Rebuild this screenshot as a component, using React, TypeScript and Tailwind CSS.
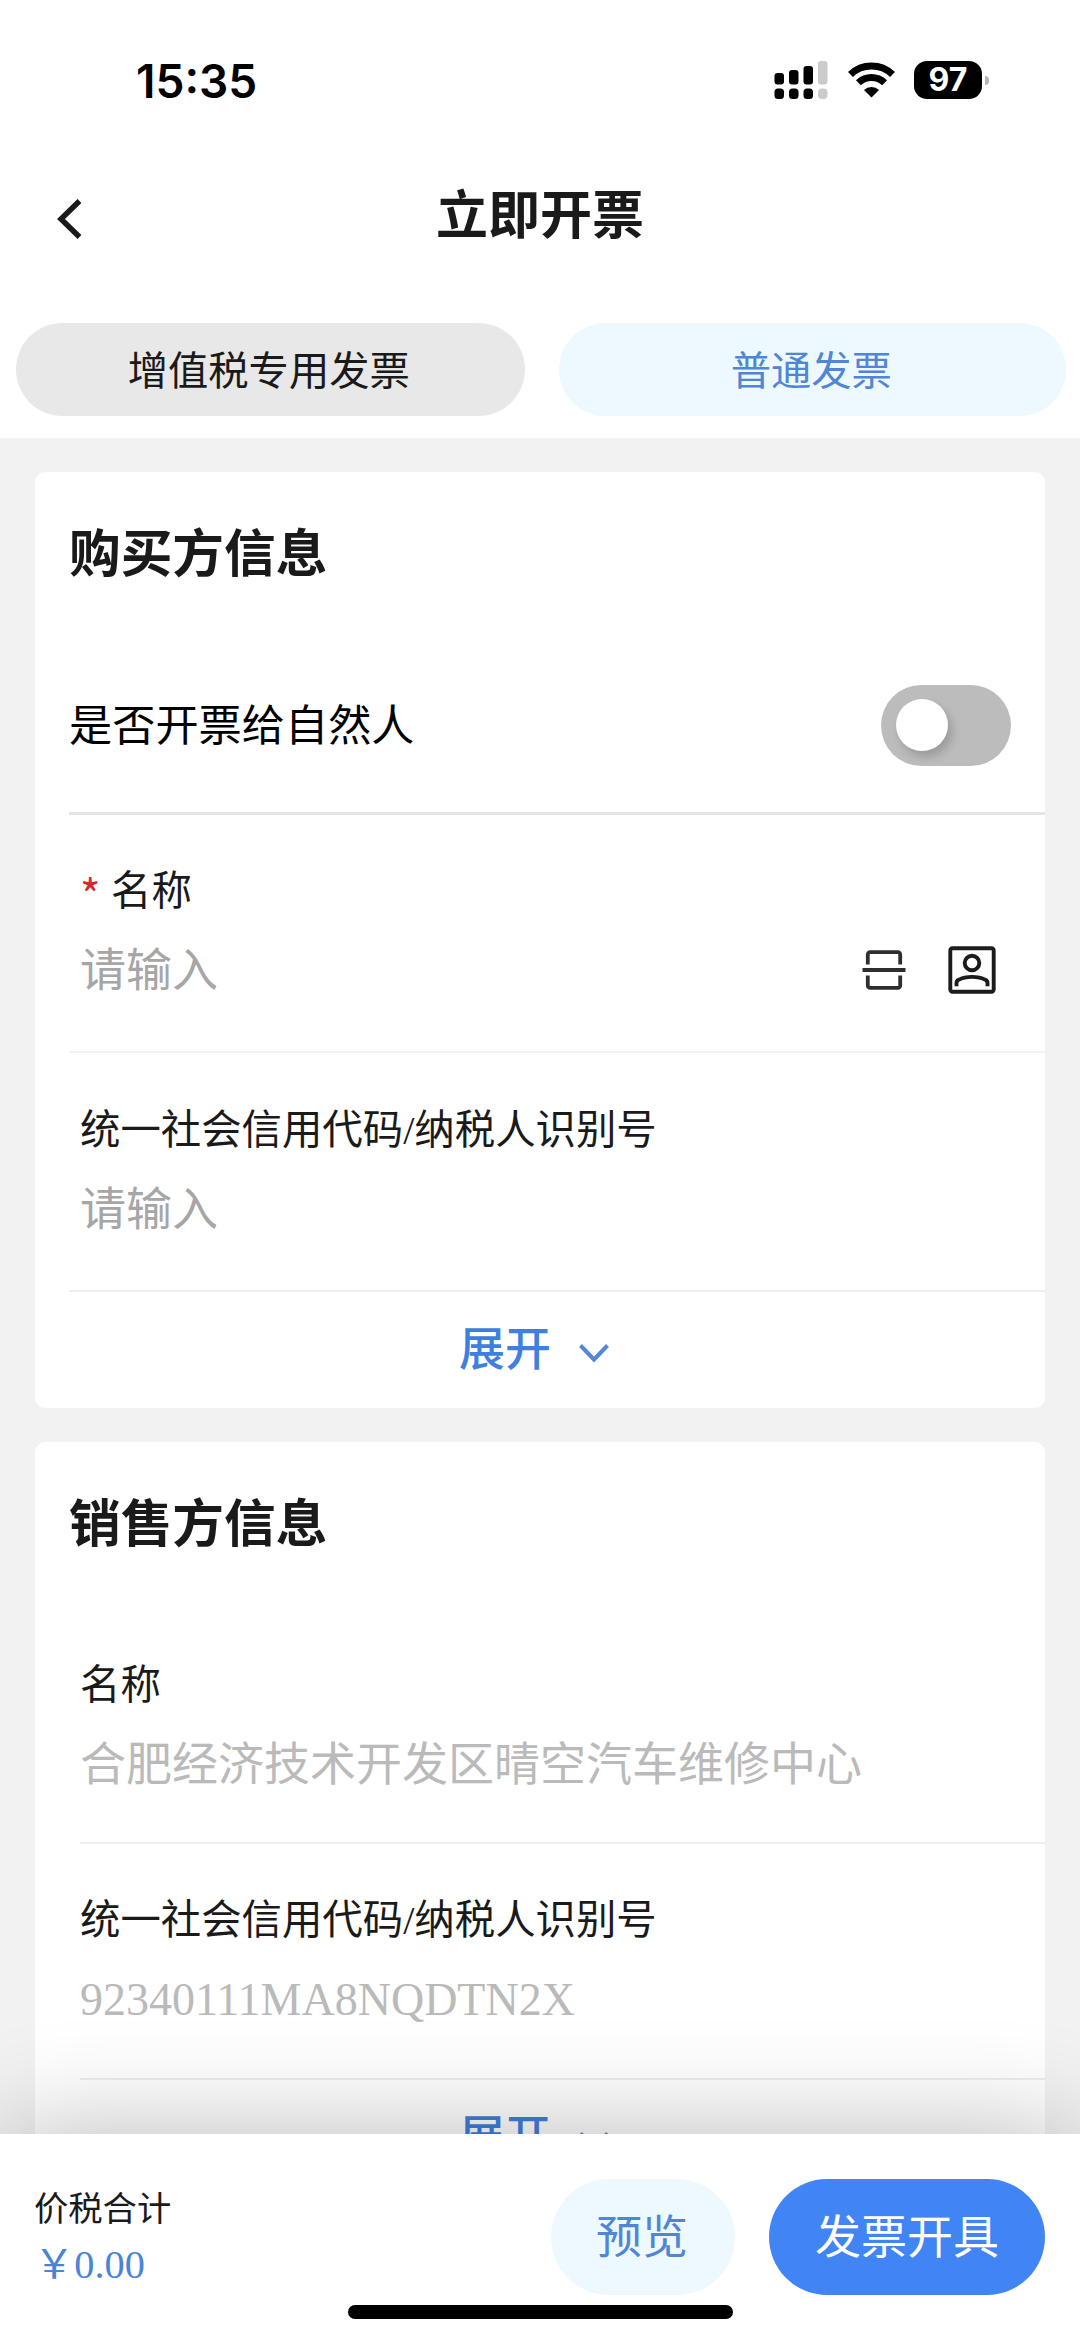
import type { ReactNode } from "react";

const StatusBar = () => {
  return (
    <div className="flex h-[160px] items-center justify-between pr-[91px] pl-[136px] font-['Inter',sans-serif]">
      <span className="pt-[1px] text-[46px] leading-[50px] font-semibold text-black">
        15:35
      </span>
      <div className="flex items-center">
        <svg className="h-[38px] w-[55px]" viewBox="0 0 55 38" fill="#000">
          <rect x="0.5" y="12" width="9.5" height="11.5" rx="3" />
          <rect x="15" y="9" width="9.5" height="14.5" rx="3" />
          <rect x="29.5" y="5" width="9.5" height="18.5" rx="3" />
          <rect x="44" y="0" width="9.5" height="23.5" rx="3" fill="#cbcbcb" />
          <rect x="0.5" y="27.5" width="9.5" height="10.5" rx="3.5" />
          <rect x="15" y="27.5" width="9.5" height="10.5" rx="3.5" />
          <rect x="29.5" y="27.5" width="9.5" height="10.5" rx="3.5" />
          <rect x="44" y="27.5" width="9.5" height="10.5" rx="4" fill="#cbcbcb" />
        </svg>
        <svg className="ml-[19px] h-[36px] w-[47px]" viewBox="0 0 47 36">
          <g fill="none" stroke="#000" strokeWidth="7">
            <path d="M2.5 12.5a30.5 30.5 0 0 1 42 0" />
            <path d="M10.4 20.8a18.8 18.8 0 0 1 26.2 0" />
          </g>
          <path d="M23.5 35.5l-7.5-7.5a10.8 10.8 0 0 1 15 0z" fill="#000" />
        </svg>
        <div className="ml-[19px] flex h-[38px] w-[68px] items-center justify-center rounded-[13px] bg-black text-[32px] leading-[38px] font-bold text-white">
          97
        </div>
        <div className="ml-[3px] h-[9px] w-[4px] rounded-r-full bg-[#b5b5b5]" />
      </div>
    </div>
  );
};

const NavBar = () => {
  return (
    <div className="grid h-[118px] grid-cols-3 items-center pl-[56px]">
      <svg
        className="h-[40px] w-[28px]"
        viewBox="0 0 28 40"
        fill="none"
        stroke="#1a1a1a"
        strokeWidth="5.5"
      >
        <path d="M23.5 2L5 20l18.5 18" />
      </svg>
      <h1 className="-ml-[56px] pb-[4px] text-center text-[52px] leading-[60px] font-bold whitespace-nowrap text-[#1a1a1a]">
        立即开票
      </h1>
    </div>
  );
};

const ChevronDown = () => (
  <svg
    className="h-[22px] w-[32px]"
    viewBox="0 0 32 22"
    fill="none"
    stroke="#5488d6"
    strokeWidth="4"
  >
    <path d="M2.5 3.5L16 17.5l13.5-14" />
  </svg>
);

const ScanIcon = () => (
  <svg
    className="h-[40px] w-[44px]"
    viewBox="0 0 44 40"
    fill="none"
    stroke="#2e2e2e"
    strokeWidth="3.8"
  >
    <path d="M5.8 14.5V4.6a2.4 2.4 0 0 1 2.4-2.4h27.6a2.4 2.4 0 0 1 2.4 2.4v9.9" />
    <path d="M0.5 20h43" />
    <path d="M5.8 25.5v9.9a2.4 2.4 0 0 0 2.4 2.4h27.6a2.4 2.4 0 0 0 2.4-2.4v-9.9" />
  </svg>
);

const ContactIcon = () => (
  <svg
    className="h-[48px] w-[48px]"
    viewBox="0 0 48 48"
    fill="none"
    stroke="#1c1c1c"
    strokeWidth="3.9"
  >
    <rect x="2.3" y="2.3" width="43.4" height="43.4" rx="2.2" />
    <circle cx="24" cy="17" r="7.3" />
    <path d="M8.5 40.3v-3.1c0-1.6.6-2.7 2-3.3 3.9-2.1 8.500-3 13.500-3s9.600.9 13.500 3c1.400.6 2 1.700 2 3.300v3.100" />
  </svg>
);

type FieldProps = {
  label: string;
  value: string;
  required?: boolean;
  filled?: boolean;
  className: string;
  children?: ReactNode;
};

const Field = ({ label, value, required, filled, className, children }: FieldProps) => {
  return (
    <div className={`flex flex-col border-b-2 ${className}`}>
      <div className="flex h-[60px] items-center text-[40.4px] leading-[60px] text-[#1a1a1a]">
        {required && (
          <span className="mt-[2px] mr-[12px] w-[19px] font-['Noto_Sans_CJK_SC',sans-serif] text-[44px] leading-[60px] text-[#d8282d]">
            *
          </span>
        )}
        {label}
      </div>
      <div className="mt-[19px] flex h-[60px] items-center justify-between pr-[49px]">
        <span
          className={`text-[46px] leading-[60px] ${filled ? "text-[#bababa]" : "text-[#a6a6a6]"}`}
        >
          {value}
        </span>
        {children}
      </div>
    </div>
  );
};

const Expand = () => (
  <button className="flex h-[116px] w-full items-center pl-[424px] text-[46px] leading-[60px] font-medium text-[#3f7fe0]">
    <span>展开</span>
    <span className="ml-[27px] pt-[6px]">
      <ChevronDown />
    </span>
  </button>
);

const App = () => {
  return (
    <div className="flex h-[2341px] w-[1080px] flex-col overflow-hidden bg-[#f2f2f2] font-['Liberation_Serif','Noto_Sans_CJK_SC',serif]">
      <header className="shrink-0 bg-white">
        <StatusBar />
        <NavBar />
        <div className="flex gap-[34px] pt-[45px] pr-[14px] pb-[22px] pl-[16px] text-[40.3px] leading-[93px]">
          <button className="h-[93px] flex-1 rounded-full bg-[#e8e8e8] pt-[2px] pr-[3px] text-[#1a1a1a]">
            增值税专用发票
          </button>
          <button className="h-[93px] flex-1 rounded-full bg-[#eef8ff] pt-[2px] pr-[2px] text-[#4f86d6]">
            普通发票
          </button>
        </div>
      </header>

      <main className="flex min-h-0 flex-1 flex-col gap-[34px] overflow-hidden px-[35px] pt-[34px]">
        <section className="shrink-0 rounded-[10px] bg-white">
          <h2 className="flex h-[162px] items-center pt-[4px] pl-[34px] text-[51.7px] leading-[60px] font-bold text-[#1a1a1a]">
            购买方信息
          </h2>
          <div className="ml-[34px] flex h-[181px] items-center justify-between border-b-[3px] border-[#e6e6e6] pt-[4px] pr-[34px]">
            <span className="pt-[4px] text-[43.2px] leading-[60px] text-black">
              是否开票给自然人
            </span>
            <div className="flex h-[81px] w-[130px] items-center rounded-full bg-[#bcbcbc] pl-[15px]">
              <div className="h-[52px] w-[52px] rounded-full bg-white shadow-[4px_6px_10px_rgba(0,0,0,0.18)]" />
            </div>
          </div>
          <Field
            label="名称"
            value="请输入"
            required
            className="ml-[34px] h-[238px] border-[#f3f3f3] pt-[47px] pl-[11px]"
          >
            <div className="-mt-[2px] flex items-center gap-[42px]">
              <ScanIcon />
              <ContactIcon />
            </div>
          </Field>
          <Field
            label="统一社会信用代码/纳税人识别号"
            value="请输入"
            className="ml-[34px] h-[239px] border-[#eeeeee] pt-[48px] pl-[11px]"
          />
          <Expand />
        </section>

        <section className="shrink-0 rounded-[10px] bg-white">
          <h2 className="flex h-[166px] items-center pl-[34px] text-[51.7px] leading-[60px] font-bold text-[#1a1a1a]">
            销售方信息
          </h2>
          <Field
            label="名称"
            value="合肥经济技术开发区晴空汽车维修中心"
            filled
            className="ml-[45px] h-[236px] border-[#eeeeee] pt-[48px]"
          />
          <Field
            label="统一社会信用代码/纳税人识别号"
            value="92340111MA8NQDTN2X"
            filled
            className="ml-[45px] h-[236px] border-[#eeeeee] pt-[47px]"
          />
          <Expand />
        </section>
      </main>

      <footer className="relative flex h-[207px] shrink-0 flex-col bg-white shadow-[0_0_110px_rgba(0,0,0,0.28)]">
        <div className="flex items-center pt-[45px] pr-[35px] pl-[34px]">
          <div className="flex-1">
            <p className="text-[34.3px] leading-[56px] text-[#1a1a1a]">价税合计</p>
            <p className="text-[40.3px] leading-[56px] text-[#4a84d8]">￥0.00</p>
          </div>
          <button className="h-[116px] w-[184px] rounded-full bg-[#eef8ff] pr-[2px] text-[46px] text-[#4f86d6]">
            预览
          </button>
          <button className="ml-[34px] h-[116px] w-[276px] rounded-full bg-[#4185f4] text-[46px] text-white">
            发票开具
          </button>
        </div>
        <div className="mt-[10px] ml-[348px] h-[14px] w-[385px] rounded-full bg-black" />
      </footer>
    </div>
  );
};

export default App;
